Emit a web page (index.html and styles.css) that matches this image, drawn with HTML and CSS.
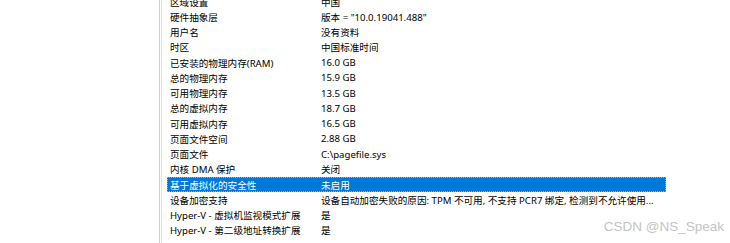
FILE: index.html
```html
<!DOCTYPE html>
<html>
<head>
<meta charset="UTF-8">
<meta name="viewport" content="width=device-width, initial-scale=1.0">
<title>系统信息</title>
<link rel="stylesheet" href="styles.css">
</head>
<body>

<div class="window">
    <div class="side"></div>
    <div class="list">
        <div class="row"><span class="name">区域设置</span><span class="value">中国</span></div>
        <div class="row"><span class="name">硬件抽象层</span><span class="value">版本 = "10.0.19041.488"</span></div>
        <div class="row"><span class="name">用户名</span><span class="value">没有资料</span></div>
        <div class="row"><span class="name">时区</span><span class="value">中国标准时间</span></div>
        <div class="row"><span class="name">已安装的物理内存(RAM)</span><span class="value">16.0 GB</span></div>
        <div class="row"><span class="name">总的物理内存</span><span class="value">15.9 GB</span></div>
        <div class="row"><span class="name">可用物理内存</span><span class="value">13.5 GB</span></div>
        <div class="row"><span class="name">总的虚拟内存</span><span class="value">18.7 GB</span></div>
        <div class="row"><span class="name">可用虚拟内存</span><span class="value">16.5 GB</span></div>
        <div class="row"><span class="name">页面文件空间</span><span class="value">2.88 GB</span></div>
        <div class="row"><span class="name">页面文件</span><span class="value">C:\pagefile.sys</span></div>
        <div class="row"><span class="name">内核 DMA 保护</span><span class="value">关闭</span></div>
        <div class="row selected"><span class="name">基于虚拟化的安全性</span><span class="value">未启用</span></div>
        <div class="row"><span class="name">设备加密支持</span><span class="value">设备自动加密失败的原因: TPM 不可用, 不支持 PCR7 绑定, 检测到不允许使用...</span></div>
        <div class="row"><span class="name">Hyper-V - 虚拟机监视模式扩展</span><span class="value">是</span></div>
        <div class="row"><span class="name">Hyper-V - 第二级地址转换扩展</span><span class="value">是</span></div>
    </div>
    <div class="watermark">CSDN @NS_Speak</div>
</div>

</body>
</html>
```

FILE: styles.css
```css
body, html {
    margin: 0;
    padding: 0;
    background-color: #fff;
    font-family: "Noto Sans", "Noto Sans CJK SC", sans-serif;
    overflow: hidden;
}

.window {
    position: relative;
    display: flex;
    height: 243px;
}

.side {
    width: 159px;
    border-right: 1px solid #cfcfcf;
    flex-shrink: 0;
}

.list {
    margin-top: -6px;
    margin-left: 1px;
    padding-left: 5px;
    border-left: 1px solid #e3e3e3;
    width: 499px;
}

.row {
    display: flex;
    height: 15.25px;
    align-items: center;
    font-size: 9.6px;
    color: #000;
    white-space: nowrap;
    box-sizing: border-box;
}

.name {
    width: 148px;
    padding-left: 3px;
    flex-shrink: 0;
}

.value {
    padding-left: 3px;
}

.selected {
    background-color: #0078d7;
    color: #fff;
    outline: 1px dotted #e8a040;
    outline-offset: -1px;
}

.watermark {
    position: absolute;
    right: 6px;
    bottom: 9px;
    font-size: 13.5px;
    color: #c4c4c4;
    font-family: "Liberation Sans", Arial, sans-serif;
}
```
